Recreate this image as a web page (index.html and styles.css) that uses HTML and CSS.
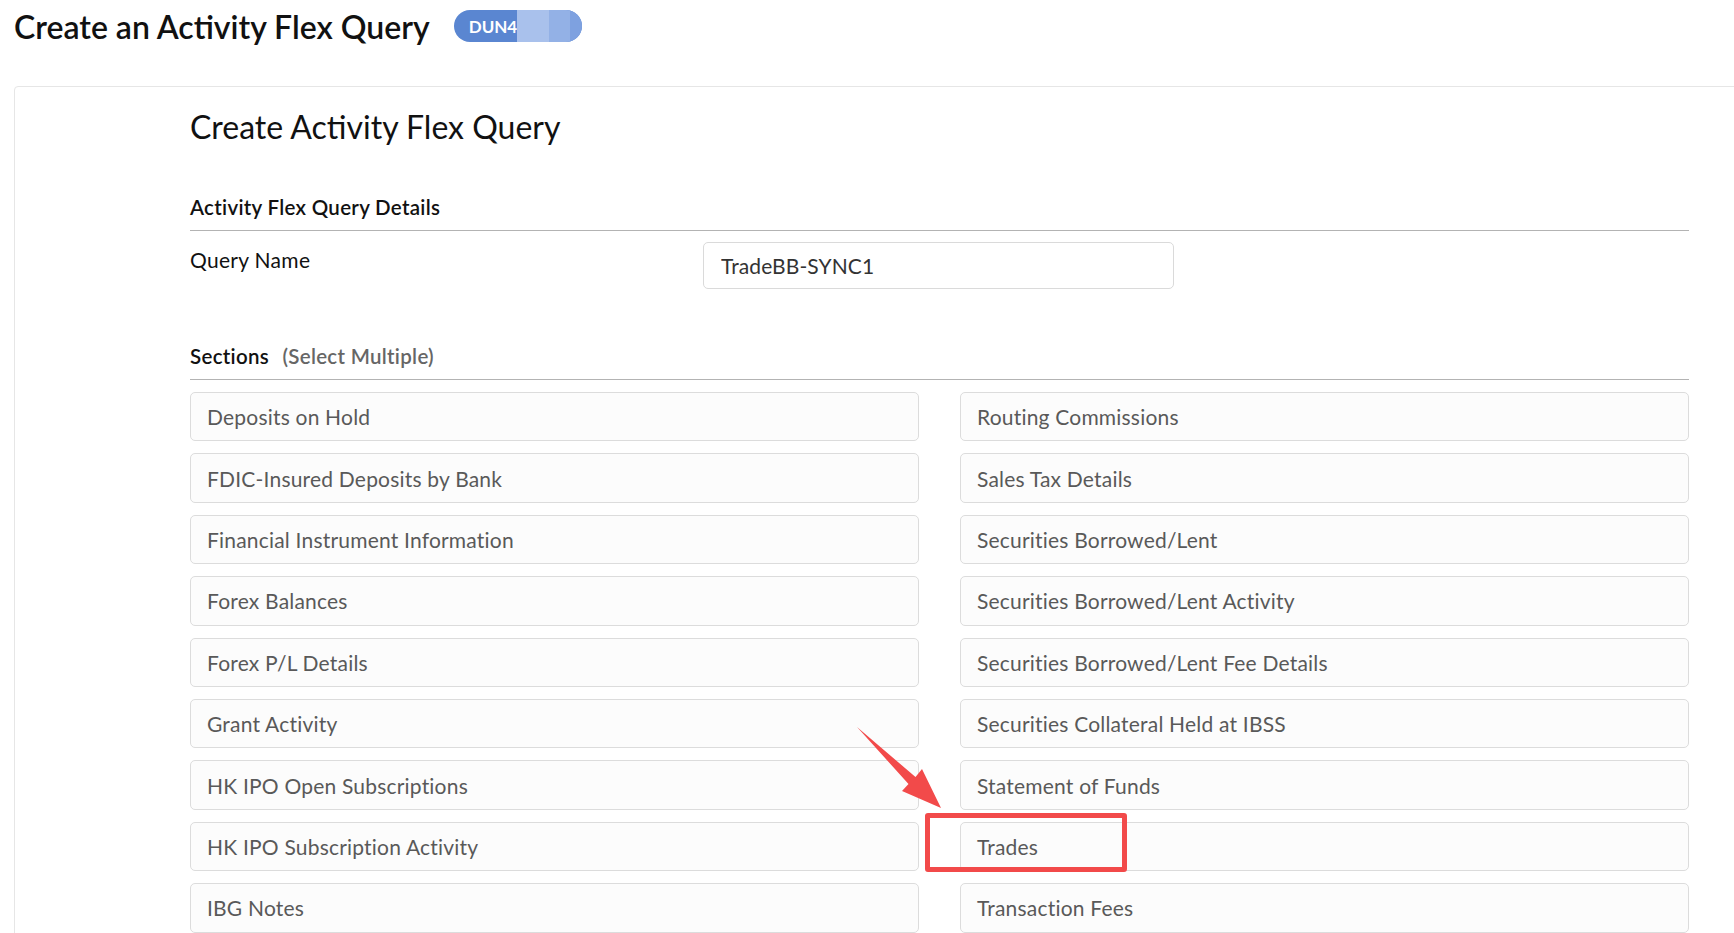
FILE: index.html
```html
<!DOCTYPE html>
<html lang="en">
<head>
  <meta charset="UTF-8">
  <meta name="viewport" content="width=device-width, initial-scale=1.0">
  <title>Create an Activity Flex Query</title>
  <link rel="stylesheet" href="styles.css">
</head>
<body>

  <div class="page-header">
    <h1 class="page-title">Create an Activity Flex Query</h1>
    <span class="account-badge">
      <span class="badge-text">DUN4</span>
      <span class="blur blur-a"></span>
      <span class="blur blur-b"></span>
      <span class="blur blur-c"></span>
    </span>
  </div>

  <div class="card">
    <h2 class="card-title">Create Activity Flex Query</h2>

    <div class="section-head">Activity Flex Query Details</div>
    <div class="field-row">
      <label class="field-label" for="queryName">Query Name</label>
      <input class="field-input" type="text" id="queryName" value="TradeBB-SYNC1">
    </div>

    <div class="section-head sections">Sections <span class="hint">(Select Multiple)</span></div>
    <div class="section-grid">
      <div class="section-item">Deposits on Hold</div>
      <div class="section-item">Routing Commissions</div>
      <div class="section-item">FDIC-Insured Deposits by Bank</div>
      <div class="section-item">Sales Tax Details</div>
      <div class="section-item">Financial Instrument Information</div>
      <div class="section-item">Securities Borrowed/Lent</div>
      <div class="section-item">Forex Balances</div>
      <div class="section-item">Securities Borrowed/Lent Activity</div>
      <div class="section-item">Forex P/L Details</div>
      <div class="section-item">Securities Borrowed/Lent Fee Details</div>
      <div class="section-item">Grant Activity</div>
      <div class="section-item">Securities Collateral Held at IBSS</div>
      <div class="section-item">HK IPO Open Subscriptions</div>
      <div class="section-item">Statement of Funds</div>
      <div class="section-item">HK IPO Subscription Activity</div>
      <div class="section-item">Trades</div>
      <div class="section-item">IBG Notes</div>
      <div class="section-item">Transaction Fees</div>
    </div>
  </div>

  <!-- annotation drawn over the screenshot -->
  <div class="mark-box"></div>
  <svg class="mark-arrow" width="100" height="100" viewBox="850 720 100 100">
    <polygon points="857,727 915.5,777 922,769 941,808 902,791 908.5,784" fill="#f24a4a"/>
  </svg>

</body>
</html>
```

FILE: styles.css
```css
body {
  margin: 0;
  font-family: Lato, "Open Sans", sans-serif;
  color: #111;
  background-color: #fff;
  position: relative;
  overflow: hidden;
  height: 933px;
}

.page-header {
  display: flex;
  align-items: center;
  height: 52px;
  padding-left: 14px;
}

.page-title {
  margin: 0;
  font-size: 32px;
  font-weight: 600;
  color: #111;
}

.account-badge {
  display: flex;
  align-items: center;
  margin-left: 24px;
  width: 128px;
  height: 32px;
  border-radius: 16px;
  background-color: #5a86d1;
  overflow: hidden;
}

.badge-text {
  padding-left: 15px;
  color: #fff;
  font-size: 17px;
  font-weight: 700;
}

.blur {
  display: block;
  height: 32px;
}

.blur-a {
  width: 38px;
  background-color: #a9c1ec;
}

.blur-b {
  width: 26px;
  background-color: #93b1e6;
}

.blur-c {
  width: 14px;
  background-color: #7ea1e0;
}

.card {
  margin-top: 34px;
  margin-left: 14px;
  width: 1900px;
  padding: 0 175px 40px;
  border: 1px solid #e6e6e6;
  border-radius: 4px;
  box-sizing: border-box;
}

.card > * {
  width: 1499px;
}

.card-title {
  margin: 21px 0 0;
  font-size: 32px;
  font-weight: 400;
  line-height: 37px;
  color: #111;
}

.section-head {
  margin-top: 50px;
  padding-bottom: 11px;
  border-bottom: 1px solid #b3b3b3;
  font-size: 20.5px;
  font-weight: 600;
  line-height: 24px;
  letter-spacing: 0.3px;
}

.section-head.sections {
  margin-top: 55px;
}

.hint {
  margin-left: 8px;
  color: #666;
}

.field-row {
  display: flex;
  align-items: flex-start;
  margin-top: 11px;
}

.field-label {
  width: 513px;
  padding-top: 6px;
  font-size: 21px;
  line-height: 24px;
  letter-spacing: 0.3px;
}

.field-input {
  width: 471px;
  height: 47px;
  padding: 0 17px;
  box-sizing: border-box;
  border: 1px solid #dadada;
  border-radius: 5px;
  font-family: inherit;
  font-size: 21px;
  letter-spacing: 0.1px;
  color: #333;
}

.section-grid {
  display: grid;
  grid-template-columns: 1fr 1fr;
  column-gap: 41px;
  row-gap: 12px;
  margin-top: 12px;
}

.section-item {
  display: flex;
  align-items: center;
  height: 49.4px;
  padding-left: 16px;
  box-sizing: border-box;
  border: 1px solid #dcdcdc;
  border-radius: 5px;
  background-color: #fcfcfc;
  font-size: 21px;
  letter-spacing: 0.2px;
  color: #595959;
}

.mark-box {
  position: absolute;
  left: 925px;
  top: 813px;
  width: 202px;
  height: 59px;
  box-sizing: border-box;
  border: 5px solid #f24a4a;
  border-radius: 3px;
}

.mark-arrow {
  position: absolute;
  left: 850px;
  top: 720px;
}
```
